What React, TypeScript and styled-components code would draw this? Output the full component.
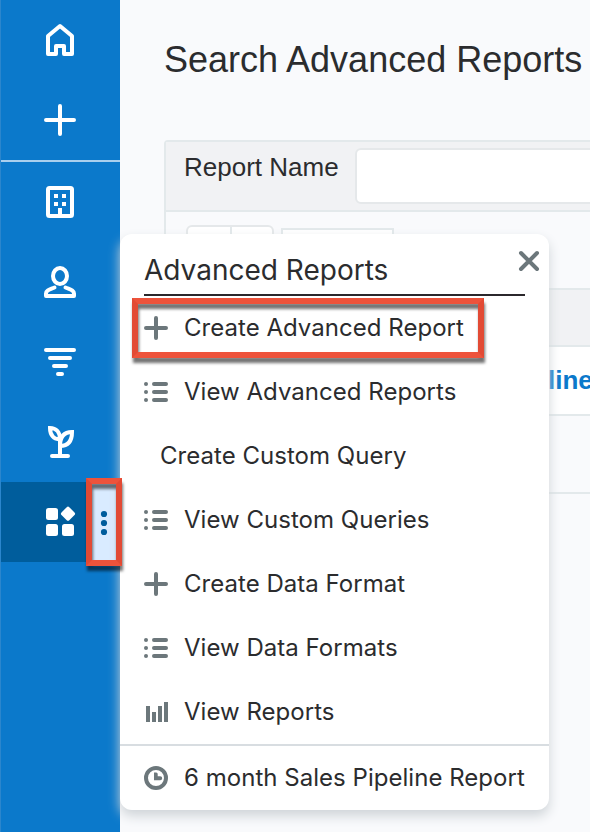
import React from "react";
import styled, { createGlobalStyle } from "styled-components";

const GlobalStyle = createGlobalStyle`
  * { box-sizing: border-box; }
  body { margin: 0; background: #f9fafc; color: #2b2c2e; overflow: hidden; }
`;

const Page = styled.div`
  position: relative;
  display: flex;
  width: 590px;
  height: 832px;
  overflow: hidden;
  background: #f9fafc;
`;

const Sidebar = styled.nav`
  display: flex;
  flex-direction: column;
  flex: none;
  width: 120px;
  background: #0b79cb;
  border-left: 1px solid #2b86cd;
`;

const NavItem = styled.div<{ $active?: boolean }>`
  display: flex;
  align-items: center;
  height: 80px;
  padding-left: 43px;
  background: ${(p) => (p.$active ? "#005d9c" : "transparent")};
  color: #fff;
`;

const NavDivider = styled.div`
  height: 2px;
  background: #a9cfee;
`;

const MoreButton = styled.button`
  display: flex;
  align-items: center;
  justify-content: center;
  width: 32px;
  height: 80px;
  margin-left: 13px;
  padding: 0;
  border: 0;
  background: #d9ebff;
`;

const Icon = styled.svg<{ $size: number }>`
  display: block;
  flex: none;
  width: ${(p) => p.$size}px;
  height: ${(p) => p.$size}px;
  overflow: visible;
  fill: none;
  stroke: currentColor;
  stroke-width: 4;
`;

const Content = styled.main`
  flex: none;
  width: 500px;
  padding-left: 44px;
`;

const Title = styled.h1`
  margin: 0;
  height: 140px;
  padding-top: 39px;
  font: 400 36px/42px "Liberation Sans", Arial, sans-serif;
  white-space: nowrap;
`;

const Panel = styled.section`
  border: 2px solid #e3e9eb;
  border-radius: 4px 0 0 0;
`;

const SearchRow = styled.div`
  display: flex;
  height: 70px;
  padding: 6px 0 0 18px;
  border-bottom: 2px solid #e3e9eb;
  background: #f1f2f4;
`;

const Label = styled.label`
  width: 171px;
  padding-top: 4px;
  font: 400 26px/30px "Liberation Sans", Arial, sans-serif;
`;

const Field = styled.div`
  flex: 1;
  height: 56px;
  border: 2px solid #e5e8ea;
  border-radius: 6px;
  background: #fff;
`;

const Controls = styled.div`
  display: flex;
  height: 76px;
  padding: 13px 0 0 20px;
`;

const ButtonPair = styled.div`
  display: flex;
  width: 88px;
  height: 44px;
  border: 2px solid #e5e8ea;
  border-radius: 6px;
  background: #fff;
  &::before {
    content: "";
    width: 44px;
    border-right: 2px solid #e3e9eb;
    margin-left: -2px;
  }
`;

const SelectBox = styled.div`
  width: 113px;
  height: 40px;
  margin: 3px 0 0 7px;
  border: 2px solid #e3e9eb;
  background: #fff;
`;

const TableRow = styled.div<{ $height: number; $bg: string }>`
  display: flex;
  align-items: center;
  height: ${(p) => p.$height}px;
  padding: 0 0 2px 382px;
  border-top: 2px solid #e3e9eb;
  background: ${(p) => p.$bg};
`;

const ReportLink = styled.span`
  color: #0b79cb;
  font: 700 26px/30px "Liberation Sans", Arial, sans-serif;
`;

const Popover = styled.aside`
  position: absolute;
  top: 234px;
  left: 120px;
  display: flex;
  flex-direction: column;
  width: 429px;
  height: 576px;
  border-radius: 12px;
  background: #fff;
  box-shadow: 0 6px 12px #cfd4d8;
  font-family: Inter, sans-serif;
`;

const PopoverHeader = styled.header`
  display: flex;
  justify-content: space-between;
  height: 62px;
  padding: 0 10px 0 24px;
`;

const PopoverTitle = styled.h2`
  flex: none;
  width: 381px;
  height: 62px;
  margin: 0;
  padding-top: 19px;
  border-bottom: 2px solid #2b282c;
  font-size: 28px;
  font-weight: 400;
  line-height: 34px;
`;

const CloseButton = styled.button`
  flex: none;
  width: 20px;
  height: 20px;
  margin: 17px 0 0 -6px;
  padding: 0;
  border: 0;
  background: none;
  color: #6c777b;
`;

const MenuRow = styled.div<{ $plain?: boolean }>`
  display: flex;
  align-items: center;
  gap: 16px;
  height: 64px;
  padding-left: ${(p) => (p.$plain ? 40 : 24)}px;
  color: #6c777b;
`;

const MenuText = styled.span`
  color: #2b2c2e;
  font-size: 24px;
  line-height: 30px;
  letter-spacing: 0.03px;
  white-space: nowrap;
`;

const RecentSection = styled.div`
  border-top: 2px solid #d8dde1;
`;

const Highlight = styled.div<{ $x: number; $y: number; $w: number; $h: number }>`
  position: absolute;
  left: ${(p) => p.$x}px;
  top: ${(p) => p.$y}px;
  width: ${(p) => p.$w}px;
  height: ${(p) => p.$h}px;
  border: 6px solid;
  border-color: #ed533b #e24a34;
  filter: drop-shadow(1px 5px 1.5px rgba(0, 0, 0, 0.55));
  pointer-events: none;
`;

const NavIcon = ({ children }: { children: React.ReactNode }) => (
  <Icon $size={32} viewBox="0 0 32 32" strokeLinecap="round" strokeLinejoin="round">
    {children}
  </Icon>
);

type MenuKind = "plus" | "list" | "bars" | "clock";

const MenuIcon = ({ kind }: { kind: MenuKind }) => (
  <Icon $size={24} viewBox="0 0 24 24" strokeLinecap="round">
    {kind === "plus" && <path d="M12 2v20M2 12h20" />}
    {kind === "list" && (
      <>
        <path d="M10 4h12M10 12h12M10 20h12" />
        <g fill="currentColor" stroke="none">
          <circle cx="2" cy="4" r="2" />
          <circle cx="2" cy="12" r="2" />
          <circle cx="2" cy="20" r="2" />
        </g>
      </>
    )}
    {kind === "bars" && (
      <path d="M4 6v16M10 12v10M16 6v16M22 2v20" strokeLinecap="butt" />
    )}
    {kind === "clock" && (
      <>
        <circle cx="12" cy="12" r="10" />
        <path d="M10 6.5h2.2a1.5 1.5 0 0 1 1.5 1.5v2.2h2.5a2 2 0 0 1 0 4H10z" fill="currentColor" stroke="none" />
      </>
    )}
  </Icon>
);

const items: { label: string; kind?: MenuKind }[] = [
  { label: "Create Advanced Report", kind: "plus" },
  { label: "View Advanced Reports", kind: "list" },
  { label: "Create Custom Query" },
  { label: "View Custom Queries", kind: "list" },
  { label: "Create Data Format", kind: "plus" },
  { label: "View Data Formats", kind: "list" },
  { label: "View Reports", kind: "bars" },
];

export default function App() {
  return (
    <>
      <GlobalStyle />
      <Page>
        <Sidebar>
          <NavItem>
            <NavIcon>
              <path d="M4 30V12L16 2l12 10v18h-8v-8h-8v8z" />
            </NavIcon>
          </NavItem>
          <NavItem>
            <NavIcon>
              <path d="M16 2v28M2 16h28" />
            </NavIcon>
          </NavItem>
          <NavDivider />
          <NavItem>
            <NavIcon>
              <rect x="4" y="2" width="24" height="28" rx="1.5" />
              <path d="M10 8h4v4h-4zM18 8h4v4h-4zM10 16h4v4h-4zM18 16h4v4h-4zM14 22h4v6h-4z" fill="currentColor" stroke="none" />
            </NavIcon>
          </NavItem>
          <NavItem>
            <NavIcon>
              <ellipse cx="16" cy="10" rx="7" ry="8" />
              <path d="M10.5 21.5C6 23.5 2 24 2 27.5V30h28v-2.5C30 24 26 23.5 21.5 21.5" />
            </NavIcon>
          </NavItem>
          <NavItem>
            <NavIcon>
              <path d="M2 4h28M6 12h20M10 20h12M14 28h4" />
            </NavIcon>
          </NavItem>
          <NavItem>
            <NavIcon>
              <g strokeLinejoin="miter">
                <path d="M8 30h16M16 30V13" />
                <path d="M6 2C12 2 16 6 16 13 10 14 6 9 6 2z" />
                <path d="M28 6c-8 0-12 5-12 14 8 0 12-5 12-14z" />
              </g>
            </NavIcon>
          </NavItem>
          <NavItem $active>
            <NavIcon>
              <g fill="currentColor" stroke="none">
                <rect x="2" y="2" width="12" height="12" rx="2.5" />
                <rect x="2" y="18" width="12" height="12" rx="2.5" />
                <rect x="18" y="18" width="12" height="12" rx="2.5" />
                <rect x="18.5" y="2.2" width="11" height="11" rx="1.8" transform="rotate(45 24 7.7)" />
              </g>
            </NavIcon>
            <MoreButton aria-label="More">
              <Icon $size={24} viewBox="0 0 24 24" color="#005d9c">
                <g fill="currentColor" stroke="none">
                  <circle cx="11" cy="4" r="3.1" />
                  <circle cx="11" cy="13" r="3.1" />
                  <circle cx="11" cy="22" r="3.1" />
                </g>
              </Icon>
            </MoreButton>
          </NavItem>
        </Sidebar>
        <Content>
          <Title>Search Advanced Reports</Title>
          <Panel>
            <SearchRow>
              <Label>Report Name</Label>
              <Field />
            </SearchRow>
            <Controls>
              <ButtonPair />
              <SelectBox />
            </Controls>
            <TableRow $height={57} $bg="#f1f2f4" />
            <TableRow $height={69} $bg="#ffffff">
              <ReportLink>line</ReportLink>
            </TableRow>
            <TableRow $height={78} $bg="#f9fafc" />
          </Panel>
        </Content>
        <Popover>
          <PopoverHeader>
            <PopoverTitle>Advanced Reports</PopoverTitle>
            <CloseButton aria-label="Close">
              <Icon $size={20} viewBox="0 0 20 20" strokeLinecap="round">
                <path d="M2 2l16 16M18 2L2 18" />
              </Icon>
            </CloseButton>
          </PopoverHeader>
          {items.map(({ label, kind }) => (
            <MenuRow key={label} $plain={!kind}>
              {kind && <MenuIcon kind={kind} />}
              <MenuText>{label}</MenuText>
            </MenuRow>
          ))}
          <RecentSection>
            <MenuRow>
              <MenuIcon kind="clock" />
              <MenuText>6 month Sales Pipeline Report</MenuText>
            </MenuRow>
          </RecentSection>
        </Popover>
        <Highlight $x={132} $y={298} $w={352} $h={60} />
        <Highlight $x={86} $y={478} $w={36} $h={88} />
      </Page>
    </>
  );
}
